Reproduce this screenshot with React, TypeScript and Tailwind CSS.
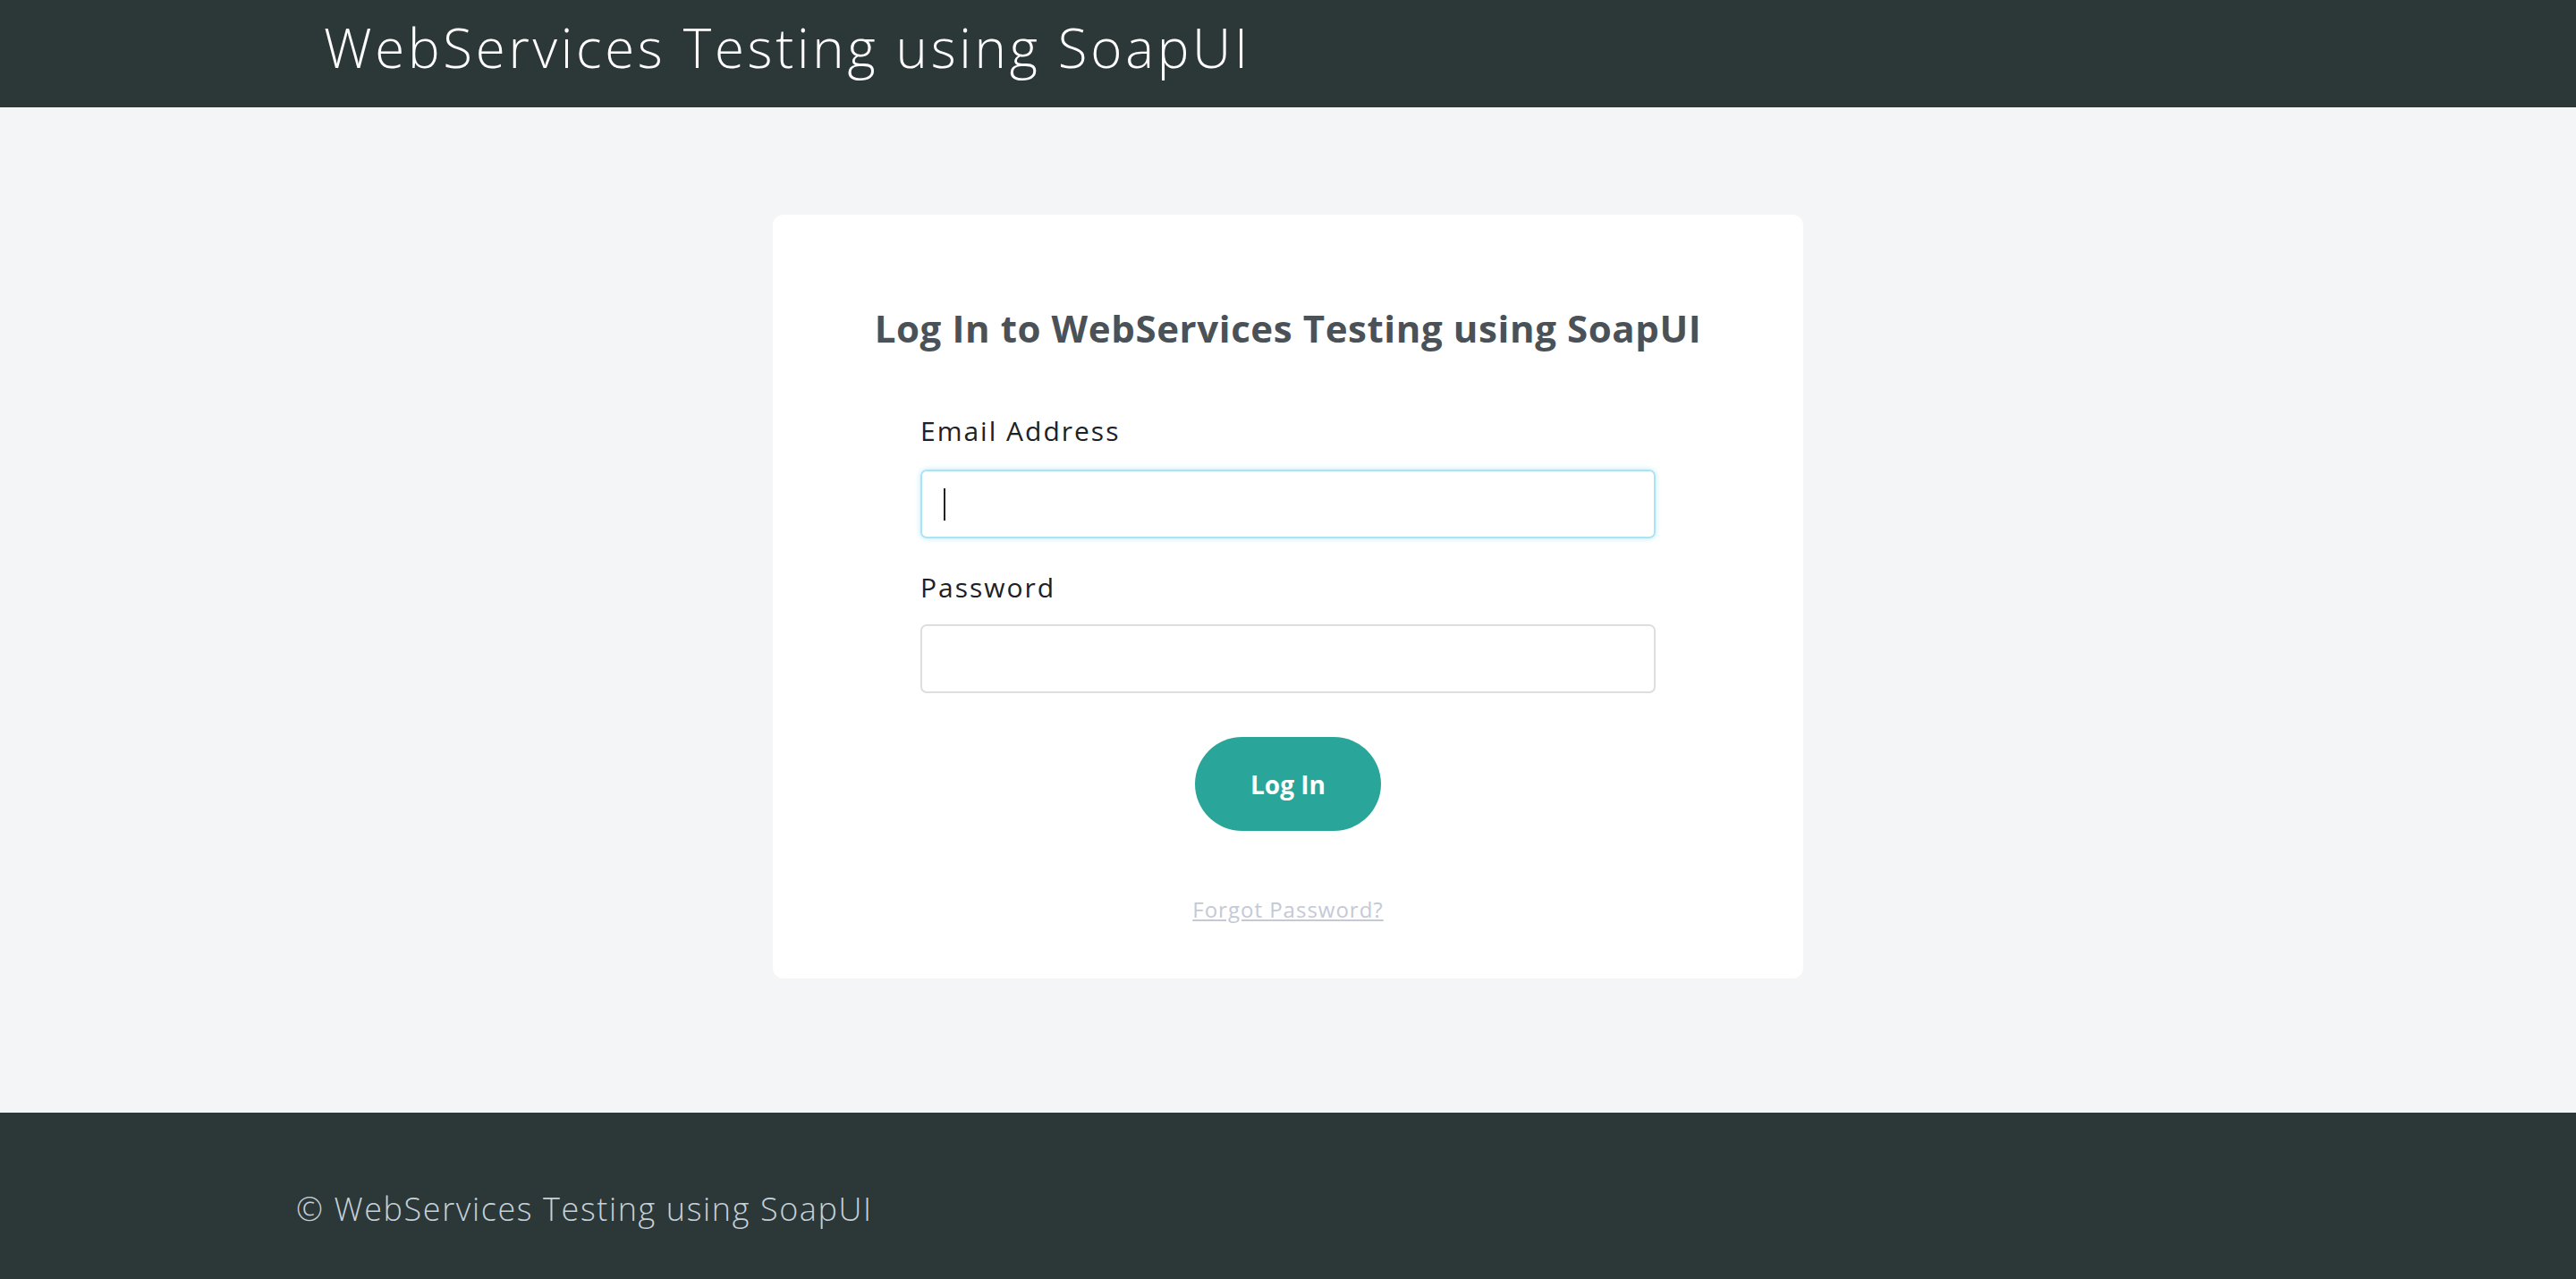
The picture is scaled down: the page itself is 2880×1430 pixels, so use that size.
const font = { fontFamily: '"Open Sans", "Liberation Sans", sans-serif' };

const Header = () => (
  <header className="h-[120px] bg-[#2c3738] flex items-center pb-[14px]">
    <h1 className="pl-[362px] text-[60px] font-light text-white leading-none tracking-[3.7px]">
      WebServices Testing using SoapUI
    </h1>
  </header>
);

const LoginCard = () => (
  <div className="w-[1152px] h-[854px] bg-white rounded-[12px] flex flex-col items-center pt-[98px]">
    <h2 className="text-[42px] font-bold text-[#4a5258] leading-[58px] tracking-[0.6px]">
      Log In to WebServices Testing using SoapUI
    </h2>
    <form className="w-[822px] mt-[65px] flex flex-col">
      <label className="text-[30px] text-[#1d2125] leading-[42px] tracking-[2px]">Email Address</label>
      <div className="mt-[22px] h-[77px] rounded-[7px] border-2 border-[#a9e3f4] shadow-[0_0_6px_#bdeaf7] flex items-center px-[24px]">
        <span className="w-[2px] h-[36px] bg-[#222]" />
      </div>
      <label className="mt-[34px] text-[30px] text-[#1d2125] leading-[42px] tracking-[2px]">Password</label>
      <div className="mt-[20px] h-[77px] rounded-[7px] border-2 border-[#dedede]" />
      <div className="flex justify-center mt-[49px]">
        <button
          type="button"
          className="w-[208px] h-[105px] rounded-full bg-[#29a699] text-white text-[28px] font-bold"
        >
          Log In
        </button>
      </div>
      <div className="flex justify-center mt-[71px]">
        <a href="#" className="text-[24px] text-[#c4c9d5] underline leading-[34px] tracking-[1px]">
          Forgot Password?
        </a>
      </div>
    </form>
  </div>
);

const Footer = () => (
  <footer className="h-[186px] bg-[#2c3738] flex items-center pt-[30px]">
    <p className="pl-[331px] text-[36px] font-light text-[#c5d0d8] leading-none tracking-[1.6px]">
      © WebServices Testing using SoapUI
    </p>
  </footer>
);

export default function App() {
  return (
    <div className="min-h-[1430px] flex flex-col bg-[#f4f5f7]" style={font}>
      <Header />
      <main className="flex-1 flex justify-center pt-[120px] pb-[150px]">
        <LoginCard />
      </main>
      <Footer />
    </div>
  );
}
